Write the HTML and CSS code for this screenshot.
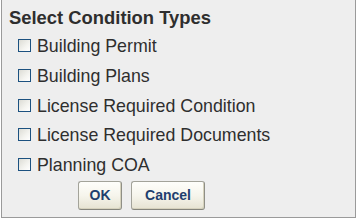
FILE: index.html
```html
<!DOCTYPE html>
<html lang="en">
<head>
    <meta charset="UTF-8">
    <title>Select Condition Types</title>
    <link rel="stylesheet" href="styles.css">
</head>
<body>

<div class="panel">
    <h2 class="title">Select Condition Types</h2>
    <form id="conditionForm" class="options">
        <label class="option"><input type="checkbox" name="type" value="permit"><span>Building Permit</span></label>
        <label class="option"><input type="checkbox" name="type" value="plans"><span>Building Plans</span></label>
        <label class="option"><input type="checkbox" name="type" value="license-condition"><span>License Required Condition</span></label>
        <label class="option"><input type="checkbox" name="type" value="license-docs"><span>License Required Documents</span></label>
        <label class="option"><input type="checkbox" name="type" value="coa"><span>Planning COA</span></label>
        <div class="actions">
            <button type="submit" class="btn btn-ok">OK</button>
            <button type="button" class="btn btn-cancel">Cancel</button>
        </div>
    </form>
</div>

</body>
</html>
```

FILE: styles.css
```css
/* Estilos básicos */
body {
    margin: 0;
    font-family: "Liberation Sans", Arial, sans-serif;
    background: #ffffff;
}
.panel {
    box-sizing: border-box;
    width: 355px;
    height: 218px;
    margin-left: 1px;
    padding: 8px 0 0 7px;
    background: #eeeeee;
    border: 1px solid #9a9a9a;
    border-top: none;
    color: #2e2e2e;
}
.title {
    margin: 0 0 4px 0;
    font-size: 18.4px;
    line-height: 20px;
    font-weight: bold;
}
.options {
    display: flex;
    flex-direction: column;
}
.option {
    display: flex;
    align-items: flex-start;
    height: 29.75px;
    padding-left: 9px;
    font-size: 17.8px;
    line-height: 29.75px;
}
.option input {
    -webkit-appearance: none;
    appearance: none;
    box-sizing: border-box;
    width: 13px;
    height: 13px;
    margin: 7px 6px 0 0;
    border: 1px solid #1c5180;
    background: linear-gradient(135deg, #dcdcd5 0%, #f4f4f0 60%, #ffffff 100%);
}
.option input:checked {
    background: #ffffff;
}
.actions {
    display: flex;
    gap: 9px;
    padding-left: 69px;
}
.btn {
    box-sizing: border-box;
    height: 29px;
    padding: 0;
    font-family: "Liberation Sans", Arial, sans-serif;
    font-size: 14px;
    font-weight: bold;
    color: #1f3f6e;
    border: 1px solid #a3a39a;
    border-right-color: #8f8f86;
    border-bottom-color: #85857c;
    border-radius: 3px;
    background: linear-gradient(#fefefb 0%, #f6f5ec 50%, #e6e3d2 100%);
    box-shadow: inset -1px -1px 0 #d6d2bd;
    cursor: pointer;
}
.btn-ok {
    width: 44px;
}
.btn-cancel {
    width: 74px;
}
```
